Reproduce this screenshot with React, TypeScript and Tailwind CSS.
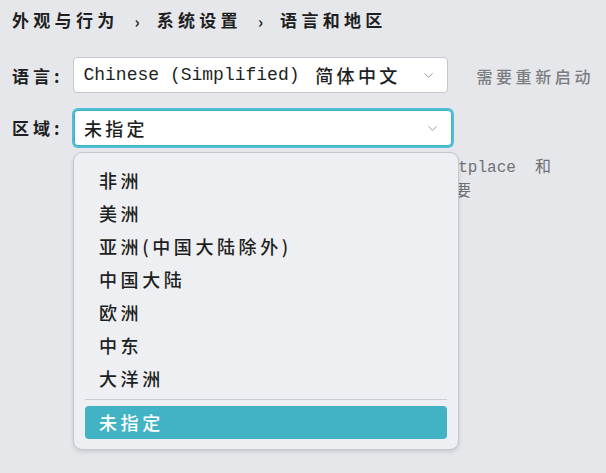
import { ChevronDown } from 'lucide-react'

const cjk = "font-['Noto_Sans_CJK_SC',sans-serif]"
const mono = "font-['Liberation_Mono','Noto_Sans_CJK_SC',monospace]"

const regions = ['非洲', '美洲', '亚洲(中国大陆除外)', '中国大陆', '欧洲', '中东', '大洋洲']

function Crumb({ text }: { text: string }) {
  return <span className="tracking-[4.3px]">{text}</span>
}

function Sep() {
  return <span className="ml-[16px] mr-[17px] mt-[2px] text-[16px] font-bold">›</span>
}

export default function App() {
  return (
    <div className={`relative w-[606px] h-[473px] overflow-hidden bg-[#e6e7eb] px-[12px] pt-[8px] text-[#1e1f22] ${cjk}`}>
      {/* Breadcrumb */}
      <div className="flex items-center h-[24px] text-[17px] font-bold whitespace-nowrap">
        <Crumb text="外观与行为" />
        <Sep />
        <Crumb text="系统设置" />
        <Sep />
        <Crumb text="语言和地区" />
      </div>

      {/* Language */}
      <div className="mt-[25px] flex items-center">
        <span className="w-[62px] mt-[2px] text-[17px] font-semibold tracking-[4px]">语言:</span>
        <div className="flex items-center justify-between w-[378px] h-[36px] rounded-[4px] border border-[#c4c7cc] bg-white pl-[9px] pr-[11px]">
          <span className="flex items-center whitespace-nowrap">
            <span className={`${mono} text-[18px]`}>Chinese (Simplified)&nbsp;</span>
            <span className="ml-[5px] text-[18px] font-medium tracking-[3.3px]">简体中文</span>
          </span>
          <ChevronDown size={15} strokeWidth={1.4} className="text-[#8a8d92]" />
        </div>
        <span className="ml-[28px] mt-[2px] whitespace-nowrap text-[16px] font-medium tracking-[3.6px] text-[#7a7d82]">需要重新启动</span>
      </div>

      {/* Region */}
      <div className="mt-[17px] flex items-center">
        <span className="w-[62px] text-[17px] font-semibold tracking-[4px]">区域:</span>
        <div className="flex items-center justify-between w-[378px] h-[36px] rounded-[4px] border border-[#3eb0c6] ring-2 ring-[#4fbfd6] bg-white pl-[9px] pr-[11px]">
          <span className="text-[18px] font-medium tracking-[3.3px]">未指定</span>
          <ChevronDown size={15} strokeWidth={1.4} className="text-[#8a8d92]" />
        </div>
      </div>

      {/* Description (mostly under the popup) */}
      <div className={`mt-[10px] pl-[75px] ${mono} text-[16px] leading-[24px] text-[#6e7176]`}>
        <div className="whitespace-nowrap">区域设置用于本地化服务 例如 JetBrains Marketplace&nbsp; 和</div>
        <div className="whitespace-nowrap">其他在线服务。更改此设置后，部分插件功能可能需要</div>
      </div>

      {/* Dropdown popup */}
      <div className="absolute left-[73px] top-[152px] w-[386px] rounded-[9px] border border-[#c3c6cc] bg-[#eeeff3] pt-[11px] pb-[10px] shadow-[0_2px_4px_rgba(0,0,0,0.12)]">
        {regions.map((r) => (
          <div key={r} className="flex items-center h-[33px] pl-[25px] text-[18px] font-medium tracking-[3.6px]">
            {r}
          </div>
        ))}
        <div className="mx-[11px] mt-[4px] mb-[6px] h-px bg-[#c9ccd1]" />
        <div className="mx-[11px] flex items-center h-[33px] rounded-[4px] bg-[#42b3c5] pl-[14px] text-[18px] font-medium tracking-[3.6px] text-white">
          未指定
        </div>
      </div>
    </div>
  )
}
